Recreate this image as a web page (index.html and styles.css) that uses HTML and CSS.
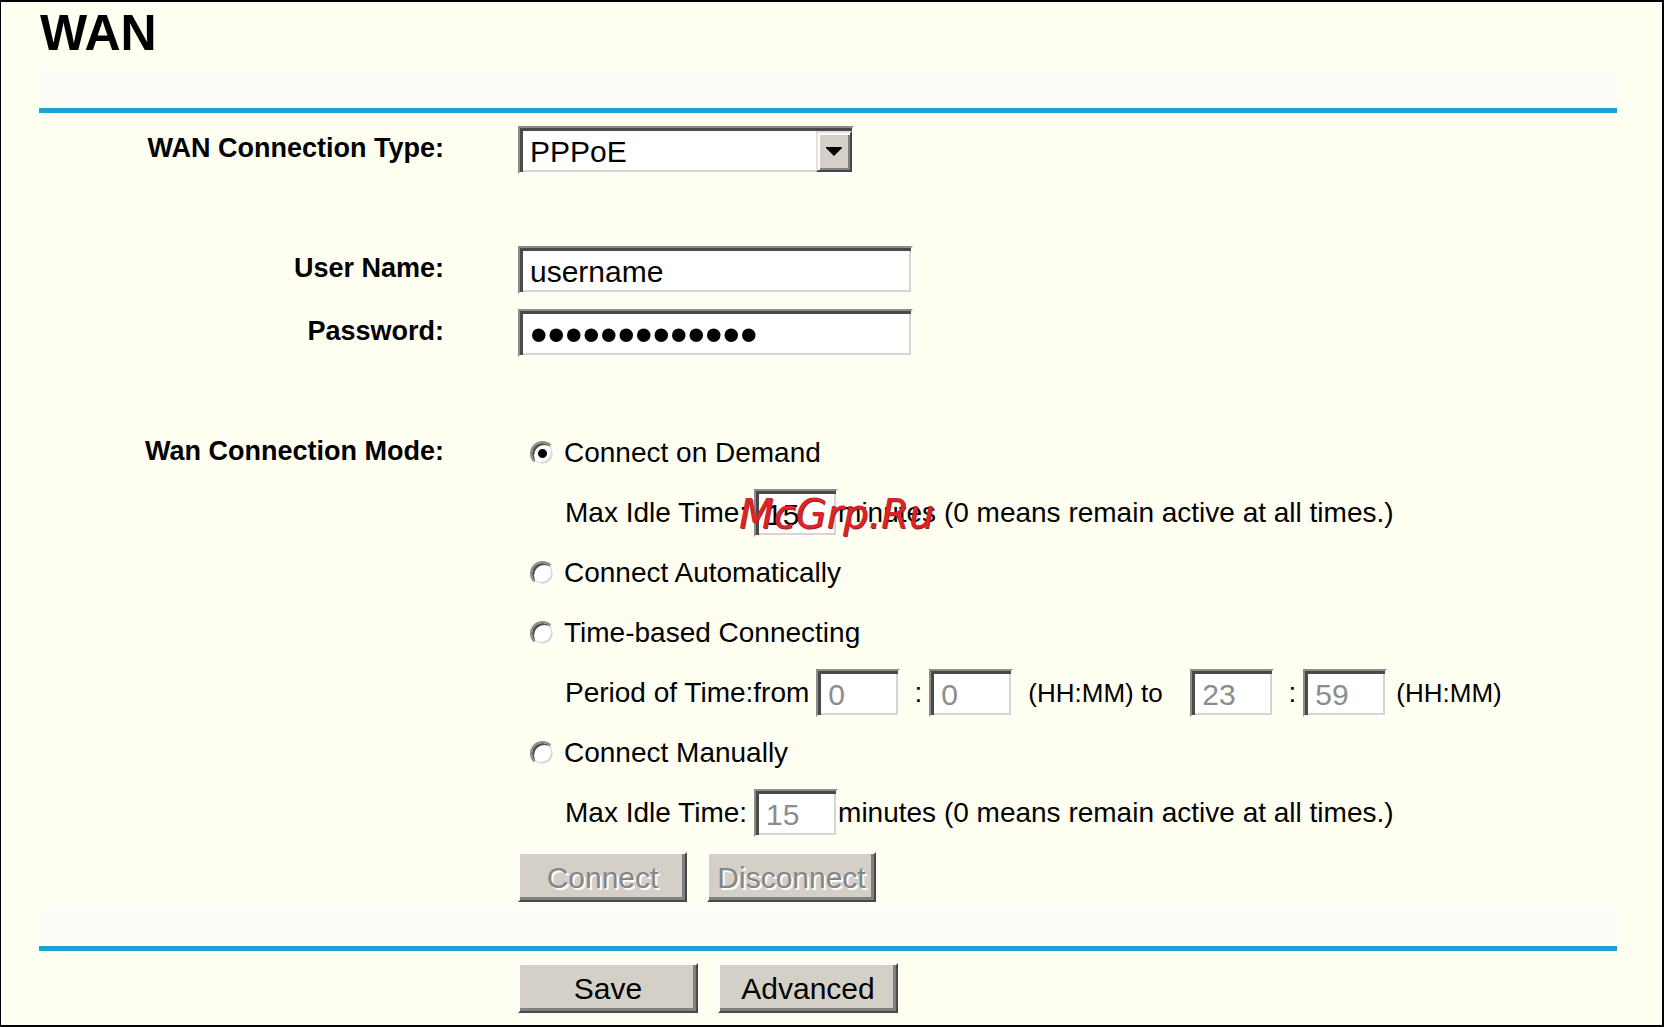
FILE: index.html
```html
<!DOCTYPE html>
<html lang="en">
<head>
  <meta charset="utf-8">
  <title>WAN</title>
  <link rel="stylesheet" href="styles.css">
</head>
<body>
  <main class="page">
    <h1 class="title">WAN</h1>
    <div class="rule"></div>

    <form class="form">
      <div class="row">
        <label class="name" for="wan-type">WAN Connection Type:</label>
        <div class="picker">
          <select class="field" id="wan-type">
            <option selected>PPPoE</option>
          </select>
          <span class="arrow" aria-hidden="true">
            <svg width="16" height="9" viewBox="0 0 16 9"><path d="M0 0H16V1L8 9L0 1Z"/></svg>
          </span>
        </div>
      </div>

      <div class="row row-spaced">
        <label class="name" for="user">User Name:</label>
        <input class="field wide" id="user" type="text" value="username">
      </div>
      <div class="row row-next">
        <label class="name" for="password">Password:</label>
        <input class="field wide secret" id="password" type="password" value="passwordpassw">
      </div>

      <div class="row row-spaced" role="radiogroup" aria-labelledby="mode-name">
        <span class="name" id="mode-name">Wan Connection Mode:</span>
        <div class="modes">
          <label class="mode"><input class="radio" type="radio" name="mode" checked>Connect on Demand</label>
          <div class="detail">
            <label class="lead" for="idle-demand">Max Idle Time:</label>
            <input class="field small" id="idle-demand" type="text" value="15">
            <span>minutes (0 means remain active at all times.)</span>
            <span class="watermark">McGrp.Ru</span>
          </div>
          <label class="mode"><input class="radio" type="radio" name="mode">Connect Automatically</label>
          <label class="mode"><input class="radio" type="radio" name="mode">Time-based Connecting</label>
          <div class="detail">
            <label class="lead" for="from-hour">Period of Time:from</label>
            <input class="field small" id="from-hour" type="text" value="0" disabled>
            <span class="colon">:</span>
            <input class="field small" aria-label="From minute" type="text" value="0" disabled>
            <span class="format format-to">(HH:MM) to</span>
            <input class="field small" aria-label="To hour" type="text" value="23" disabled>
            <span class="colon">:</span>
            <input class="field small" aria-label="To minute" type="text" value="59" disabled>
            <span class="format">(HH:MM)</span>
          </div>
          <label class="mode"><input class="radio" type="radio" name="mode">Connect Manually</label>
          <div class="detail">
            <label class="lead" for="idle-manual">Max Idle Time:</label>
            <input class="field small" id="idle-manual" type="text" value="15" disabled>
            <span>minutes (0 means remain active at all times.)</span>
          </div>
        </div>
      </div>

      <div class="buttons">
        <button class="button" type="button" disabled>Connect</button>
        <button class="button" type="button" disabled>Disconnect</button>
      </div>

      <div class="rule rule-bottom"></div>

      <div class="buttons buttons-main">
        <button class="button button-main" type="submit">Save</button>
        <button class="button button-main" type="button">Advanced</button>
      </div>
    </form>
  </main>
</body>
</html>
```
FILE: styles.css
```css
* {
  box-sizing: border-box;
}

body {
  margin: 0;
  background: #fffff2;
  color: #000;
  font-family: "Liberation Sans", Arial, sans-serif;
  font-size: 28px;
}

.page {
  min-height: 100vh;
  padding: 0 45px 11px 38px;
  border: solid #000;
  border-width: 2px 2px 2px 1px;
}

.title {
  margin: 0;
  padding: 0 0 4px 1px;
  font-size: 50px;
  line-height: 62px;
}

.rule {
  height: 45px;
  margin-bottom: 1px;
  background: #fdfdf7;
  border-bottom: 5px solid #1ba2d1;
}

.rule-bottom {
  margin-top: 4px;
}

.form {
  padding-top: 12px;
}

.row {
  display: grid;
  grid-template-columns: 405px minmax(0, 1fr);
  column-gap: 74px;
  align-items: start;
}

.row-spaced {
  margin-top: 72px;
}

.row-next {
  margin-top: 15px;
}

.name {
  font-size: 27px;
  font-weight: bold;
  line-height: 44px;
  text-align: right;
}

.field {
  height: 48px;
  margin: 0;
  padding: 3px 0 0 10px;
  appearance: none;
  border: 2px solid;
  border-color: #8c8c8a #fff #fff #8c8c8a;
  border-radius: 0;
  outline: 0;
  background: #fff;
  box-shadow: inset 3px 3px 0 #4a4a4a, inset -2px -2px 0 #d8d5ce;
  color: #000;
  font-family: inherit;
  font-size: 30px;
}

.field:disabled {
  color: #8c8c8c;
}

.wide {
  width: 395px;
}

.secret {
  font-size: 50px;
}

.small {
  flex: none;
  width: 84px;
}

.picker {
  position: relative;
  width: 336px;
}

.picker .field {
  display: block;
  width: 100%;
}

.arrow {
  position: absolute;
  top: 5px;
  right: 2px;
  display: grid;
  place-items: center;
  width: 36px;
  height: 41px;
  border: 2px solid;
  border-color: #e4e1da #484848 #484848 #e4e1da;
  background: #d4d0c8;
  box-shadow: inset 2px 2px 0 #fff, inset -2px -2px 0 #808080;
  pointer-events: none;
}

.modes {
  display: grid;
  row-gap: 12px;
}

.mode,
.detail {
  display: flex;
  align-items: center;
  height: 48px;
  white-space: nowrap;
}

.mode {
  gap: 9px;
  padding-left: 12px;
}

.detail {
  position: relative;
  padding-left: 47px;
}

.lead {
  margin-right: 7px;
}

.radio {
  width: 25px;
  height: 25px;
  margin: 0;
  appearance: none;
  border: 2px solid;
  border-color: #8c8c8a #fff #fff #8c8c8a;
  border-radius: 50%;
  background: #fff;
  box-shadow: inset 2px 2px 0 #505050, inset -2px -2px 0 #dedbd4;
}

.radio:checked {
  background: radial-gradient(circle, #000 4px, #fff 5px);
}

.colon {
  width: 29px;
  padding-right: 7px;
  text-align: right;
}

.format {
  padding-left: 9px;
  font-size: 26px;
}

.format-to {
  width: 177px;
  padding-left: 15px;
}

.watermark {
  position: absolute;
  left: 221px;
  top: 1px;
  color: #dc2428;
  font-family: "DejaVu Sans", sans-serif;
  font-size: 40px;
  font-style: oblique;
  font-kerning: none;
  line-height: 48px;
  text-shadow: 1px 1px 0 #a02020;
}

.buttons {
  display: flex;
  gap: 20px;
  margin-top: 15px;
  padding-left: 479px;
}

.buttons-main {
  margin-top: 12px;
}

.button {
  width: 169px;
  height: 50px;
  padding: 2px 0 0;
  border: 2px solid;
  border-color: #fff #484848 #484848 #fff;
  border-radius: 0;
  background: #d4d0c8;
  box-shadow: inset -3px -3px 0 #808080;
  color: #000;
  font-family: inherit;
  font-size: 30px;
  white-space: nowrap;
}

.button:disabled {
  color: #868686;
  text-shadow: 2px 2px 0 #fff;
}

.button-main {
  width: 180px;
}
```
